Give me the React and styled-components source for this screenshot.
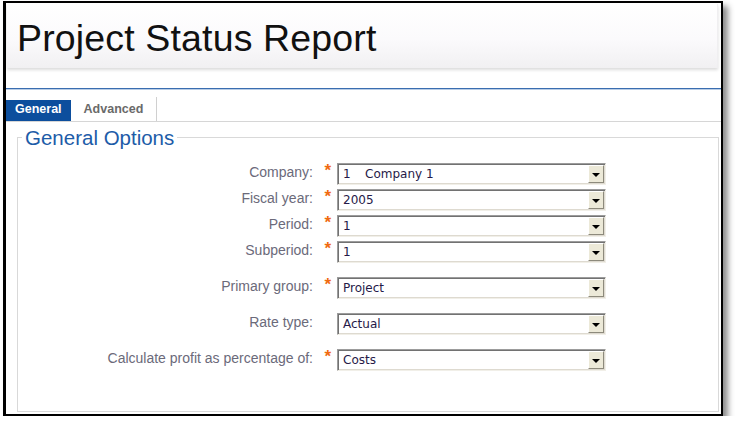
import React from 'react';
import styled, { createGlobalStyle } from 'styled-components';

const fields = [
    { label: 'Company:', code: '1', value: 'Company 1', required: true },
    { label: 'Fiscal year:', value: '2005', required: true },
    { label: 'Period:', value: '1', required: true },
    { label: 'Subperiod:', value: '1', required: true },
    { label: 'Primary group:', value: 'Project', required: true, spaced: true },
    { label: 'Rate type:', value: 'Actual', spaced: true },
    { label: 'Calculate profit as percentage of:', value: 'Costs', required: true, spaced: true },
];

function App() {
    return (
        <>
            <GlobalStyle />
            <Frame>
                <Header>
                    <Title>Project Status Report</Title>
                </Header>

                <TabBar>
                    <Tab active>General</Tab>
                    <Tab>Advanced</Tab>
                </TabBar>

                <Options>
                    <Legend>General Options</Legend>
                    <Form>
                        {fields.map((f) => (
                            <Row key={f.label} spaced={f.spaced}>
                                <Label>{f.label}</Label>
                                <Required>{f.required ? '*' : ''}</Required>
                                <Select>
                                    <Value>
                                        {f.code && <Code>{f.code}</Code>}
                                        {f.value}
                                    </Value>
                                    <DropButton>
                                        <Arrow />
                                    </DropButton>
                                </Select>
                            </Row>
                        ))}
                    </Form>
                </Options>
            </Frame>
        </>
    );
}

export default App;

const GlobalStyle = createGlobalStyle`
    body {
        margin: 0;
        background: #fff;
        font-family: "Liberation Sans", Arial, sans-serif;
    }
`;

const Frame = styled.div`
    box-sizing: border-box;
    width: 720px;
    height: 415px;
    margin: 1px 0 0 3px;
    border: 2px solid #000;
    border-left-width: 3px;
    box-shadow: 5px 5px 6px rgba(0, 0, 0, 0.45);
    background: #fff;
    display: flex;
    flex-direction: column;
    overflow: hidden;
`;

const Header = styled.header`
    box-sizing: border-box;
    height: 64px;
    margin: 1px 3px 0 1px;
    padding: 12px 0 0 10px;
    background: linear-gradient(#ffffff, #fbfafc 55%, #f1f0f2);
    border-right: 1px solid #f0eff1;
    box-shadow: 0 2px 3px rgba(0, 0, 0, 0.14);
`;

const Title = styled.h1`
    margin: 0;
    font-size: 37.5px;
    font-weight: normal;
    line-height: 44px;
    letter-spacing: 0.15px;
    color: #111;
`;

const TabBar = styled.nav`
    display: flex;
    align-items: flex-end;
    margin-top: 20px;
    padding-top: 8px;
    border-top: 1px solid #3a6db0;
    border-bottom: 1px solid #d6d6d6;
    box-shadow: inset 0 1px 0 #b9cde6;
`;

const Tab = styled.div`
    box-sizing: border-box;
    height: ${(p) => (p.active ? '21px' : '24px')};
    padding: ${(p) => (p.active ? '0 9px 2px' : '3px 13px 2px')};
    font-size: 12.5px;
    font-weight: bold;
    line-height: 19px;
    color: ${(p) => (p.active ? '#fff' : '#6a6a6a')};
    background: ${(p) => (p.active ? '#0c4e9d' : 'transparent')};
    border-right: ${(p) => (p.active ? 'none' : '1px solid #d0d0d0')};
`;

const Options = styled.fieldset`
    flex: 1;
    min-width: 0;
    margin: 4px 2px 2px 11px;
    padding: 14px 0 0;
    border: 1px solid #d9d9d9;
`;

const Legend = styled.legend`
    margin-left: 4px;
    padding: 0 3px;
    font-size: 20.5px;
    line-height: 23px;
    color: #1d5ca8;
`;

const Form = styled.div`
    display: flex;
    flex-direction: column;
    gap: 4px;
`;

const Row = styled.div`
    display: grid;
    grid-template-columns: 295px 24px 269px;
    margin-top: ${(p) => (p.spaced ? '10px' : '0')};
`;

const Label = styled.div`
    padding-top: 1px;
    text-align: right;
    font-size: 14px;
    line-height: 16px;
    color: #6b6a7a;
    white-space: nowrap;
`;

const Required = styled.div`
    padding-right: 6px;
    text-align: right;
    font-size: 17px;
    font-weight: bold;
    line-height: 16px;
    color: #f06a10;
`;

const Select = styled.div`
    box-sizing: border-box;
    display: flex;
    height: 22px;
    padding: 1px;
    background: #fff;
    border: 1px solid;
    border-color: #9c9c9c #f1efe8 #f1efe8 #9c9c9c;
    box-shadow: inset 1px 1px 0 #727272, inset -1px -1px 0 #dedad0;
`;

const Value = styled.div`
    flex: 1;
    padding: 1px 0 0 4px;
    font-family: "DejaVu Sans", Verdana, sans-serif;
    font-size: 12px;
    line-height: 17px;
    color: #261a48;
    white-space: nowrap;
`;

const Code = styled.span`
    display: inline-block;
    width: 22px;
`;

const DropButton = styled.div`
    box-sizing: border-box;
    width: 16px;
    display: flex;
    align-items: center;
    justify-content: center;
    background: #ece9d8;
    border: 1px solid;
    border-color: #fff #8d8a7c #8d8a7c #fff;
`;

const Arrow = styled.span`
    width: 0;
    height: 0;
    margin-top: 1px;
    border-left: 4px solid transparent;
    border-right: 4px solid transparent;
    border-top: 4px solid #000;
`;
